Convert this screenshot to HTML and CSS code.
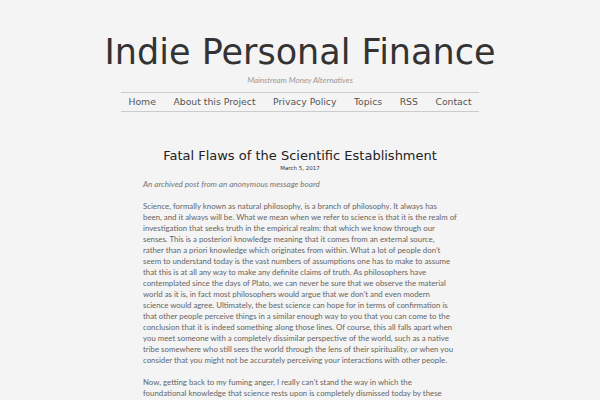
FILE: index.html
```html
<!DOCTYPE html>
<html>
<head>
<meta charset="utf-8">
<link rel="stylesheet" href="styles.css">
</head>
<body>
<header class="site-header">
  <h1 class="site-title">Indie Personal Finance</h1>
  <p class="site-tagline">Mainstream Money Alternatives</p>
  <nav class="site-nav">
    <a href="#">Home</a>
    <a href="#">About this Project</a>
    <a href="#">Privacy Policy</a>
    <a href="#">Topics</a>
    <a href="#">RSS</a>
    <a href="#">Contact</a>
  </nav>
</header>
<main class="post">
  <h2 class="post-title">Fatal Flaws of the Scientific Establishment</h2>
  <div class="post-date">March 5, 2017</div>
  <p class="post-intro">An archived post from an anonymous message board</p>
  <p class="post-text">Science, formally known as natural philosophy, is a branch of philosophy. It always has been, and it always will be. What we mean when we refer to science is that it is the realm of investigation that seeks truth in the empirical realm: that which we know through our senses. This is a posteriori knowledge meaning that it comes from an external source, rather than a priori knowledge which originates from within. What a lot of people don’t seem to understand today is the vast numbers of assumptions one has to make to assume that this is at all any way to make any definite claims of truth. As philosophers have contemplated since the days of Plato, we can never be sure that we observe the material world as it is, in fact most philosophers would argue that we don’t and even modern science would agree. Ultimately, the best science can hope for in terms of confirmation is that other people perceive things in a similar enough way to you that you can come to the conclusion that it is indeed something along those lines. Of course, this all falls apart when you meet someone with a completely dissimilar perspective of the world, such as a native tribe somewhere who still sees the world through the lens of their spirituality, or when you consider that you might not be accurately perceiving your interactions with other people.</p>
  <p class="post-text">Now, getting back to my fuming anger, I really can’t stand the way in which the foundational knowledge that science rests upon is completely dismissed today by these ignorant, indoctrinated imbeciles. You tell me to learn “some scientific method”? Christ almighty, how can you be so ignorant as to not even know where your own method comes from? The scientific method is a philosophical tool.</p>
</main>
</body>
</html>
```
FILE: styles.css
```css
html, body {
  margin: 0;
  padding: 0;
  background: #f4f4f4;
}
body {
  font-family: "DejaVu Sans", sans-serif;
  color: #333;
}
.site-header {
  display: flex;
  flex-direction: column;
  align-items: center;
  padding-top: 30px;
}
.site-title {
  margin: 0;
  font-weight: normal;
  font-size: 35px;
  line-height: 44px;
  color: #333;
}
.site-tagline {
  margin: 1px 0 7px;
  font-size: 8px;
  line-height: 10px;
  font-style: italic;
  color: #999;
  font-family: "Lato", sans-serif;
}
.site-nav {
  display: flex;
  gap: 17.5px;
  width: 358px;
  justify-content: center;
  border-top: 1px solid #ccc;
  border-bottom: 1px solid #ccc;
  padding: 3px 0 4px;
}
.site-nav a {
  font-size: 9.3px;
  line-height: 11px;
  color: #555;
  text-decoration: none;
  white-space: nowrap;
}
.post {
  width: 314px;
  margin: 36px auto 0;
}
.post-title {
  margin: 0;
  text-align: center;
  font-weight: normal;
  font-size: 13px;
  line-height: 16px;
  color: #222;
}
.post-date {
  text-align: center;
  font-size: 5.5px;
  line-height: 8px;
  color: #333;
}
.post-intro {
  margin: 7px 0 11px;
  font-family: "Lato", sans-serif;
  font-style: italic;
  font-size: 8.1px;
  line-height: 11px;
  color: #777;
}
.post-text {
  margin: 0 0 11px;
  font-family: "Lato", sans-serif;
  font-size: 7.85px;
  line-height: 11px;
  color: #666;
}
```
